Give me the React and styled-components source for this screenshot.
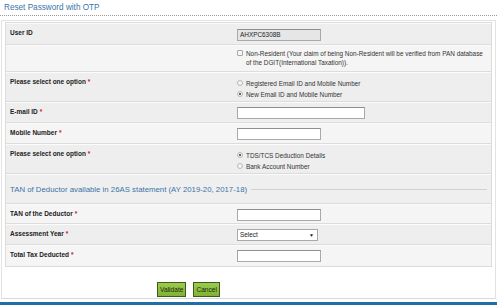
import React from "react";
import styled, { createGlobalStyle } from "styled-components";

const GlobalStyle = createGlobalStyle`
  html, body {
    margin: 0;
    padding: 0;
    background: #ffffff;
  }
  body {
    width: 497px;
    height: 305px;
    overflow: hidden;
    font-family: "Liberation Sans", Arial, sans-serif;
  }
`;

const Page = styled.div`
  width: 497px;
  height: 305px;
  display: flex;
  flex-direction: column;
`;

const Title = styled.div`
  height: 15px;
  padding-left: 4px;
  font-size: 8.2px;
  line-height: 15px;
  color: #3b74a8;
  border-bottom: 1px dotted #9a9a9a;
`;

const Panel = styled.div`
  margin: 4px 1px 0 1px;
  flex: 1;
  border: 1px solid #e2e2e2;
  border-bottom: 1px solid #d8d8d8;
  padding: 1px 3px 0 3px;
  display: flex;
  flex-direction: column;
`;

const Table = styled.div`
  border: 1px solid #dcdcdc;
  background: #efefef;
  display: flex;
  flex-direction: column;
`;

const Row = styled.div`
  display: grid;
  grid-template-columns: 231px 1fr;
  height: ${p => p.h}px;
  box-sizing: border-box;
  background: ${p => (p.light ? "#f5f5f5" : "#eeeeee")};
  border-bottom: 1px solid #dcdcdc;
  border-top: 1px solid #fbfbfb;
  &:last-child {
    border-bottom: none;
  }
`;

const Label = styled.div`
  padding: 5px 0 0 4px;
  font-size: 6.5px;
  font-weight: bold;
  color: #222;
`;

const Star = styled.span`
  color: #d0112b;
  margin-left: 2px;
`;

const Field = styled.div`
  padding-top: ${p => p.pt ?? 4}px;
  font-size: 6.4px;
  color: #333;
  display: flex;
  flex-direction: column;
  gap: ${p => p.gap ?? 0}px;
`;

const TextInput = styled.div`
  width: ${p => p.w}px;
  height: 12px;
  box-sizing: border-box;
  border: 1px solid #a9a9a9;
  border-top-color: #8f8f8f;
  background: ${p => (p.disabled ? "#e6e6e6" : "#ffffff")};
  font-size: 6.4px;
  line-height: 10px;
  padding-left: 2px;
  color: #222;
`;

const Select = styled.div`
  width: 81px;
  height: 12px;
  box-sizing: border-box;
  border: 1px solid #a9a9a9;
  background: #fff;
  font-size: 6.4px;
  line-height: 10px;
  padding: 0 3px 0 2px;
  display: flex;
  justify-content: space-between;
  align-items: center;
  color: #222;
`;

const Caret = styled.span`
  font-size: 5px;
`;

const Option = styled.div`
  display: flex;
  align-items: flex-start;
  gap: 3px;
  line-height: 9px;
`;

const Radio = styled.span`
  flex: none;
  width: 6px;
  height: 6px;
  margin-top: 1px;
  border-radius: 50%;
  border: 1px solid #b8b8b8;
  background: #f4f4f4;
  box-sizing: border-box;
  display: flex;
  align-items: center;
  justify-content: center;
  &::after {
    content: "";
    width: 2px;
    height: 2px;
    border-radius: 50%;
    background: ${p => (p.checked ? "#333" : "transparent")};
  }
`;

const Check = styled.span`
  flex: none;
  width: 6px;
  height: 6px;
  margin-top: 1px;
  border: 1px solid #a8a8a8;
  border-radius: 1px;
  background: #f6f6f6;
  box-sizing: border-box;
`;

const Section = styled.div`
  height: 30px;
  box-sizing: border-box;
  border-top: 1px solid #fbfbfb;
  border-bottom: 1px solid #dcdcdc;
  display: flex;
  align-items: center;
  gap: 4px;
  padding: 0 4px 0 4px;
  font-size: 7.8px;
  color: #3b74a8;
  &::after {
    content: "";
    flex: 1;
    height: 1px;
    background: #d0d0d0;
  }
`;

const Buttons = styled.div`
  display: flex;
  justify-content: center;
  gap: 7px;
  padding: 15px 0 0 0;
  margin-left: -120px;
`;

const Button = styled.div`
  height: 15px;
  box-sizing: border-box;
  padding: 0 2px;
  background: linear-gradient(#9ccb4f, #7fb234);
  border: 1px solid #3f5a1c;
  font-size: 6.6px;
  line-height: 13px;
  color: #1c2a08;
`;

const BlueBar = styled.div`
  height: 3px;
  margin-top: 3px;
  background: #1f6ea6;
`;

export default function App() {
  return (
    <Page>
      <GlobalStyle />
      <Title>Reset Password with OTP</Title>
      <Panel>
        <Table>
          <Row h={22}>
            <Label>User ID</Label>
            <Field pt={5}>
              <TextInput w={84} disabled>AHXPC6308B</TextInput>
            </Field>
          </Row>
          <Row h={27} light>
            <Label />
            <Field pt={3}>
              <Option>
                <Check />
                <span>
                  Non-Resident (Your claim of being Non-Resident will be verified from PAN database
                  <br />
                  of the DGIT(International Taxation)).
                </span>
              </Option>
            </Field>
          </Row>
          <Row h={30}>
            <Label>
              Please select one option<Star>*</Star>
            </Label>
            <Field pt={6} gap={2}>
              <Option>
                <Radio />
                Registered Email ID and Mobile Number
              </Option>
              <Option>
                <Radio checked />
                New Email ID and Mobile Number
              </Option>
            </Field>
          </Row>
          <Row h={21}>
            <Label>
              E-mail ID<Star>*</Star>
            </Label>
            <Field>
              <TextInput w={128} />
            </Field>
          </Row>
          <Row h={21} light>
            <Label>
              Mobile Number<Star>*</Star>
            </Label>
            <Field>
              <TextInput w={84} />
            </Field>
          </Row>
          <Row h={30}>
            <Label>
              Please select one option<Star>*</Star>
            </Label>
            <Field pt={6} gap={2}>
              <Option>
                <Radio checked />
                TDS/TCS Deduction Details
              </Option>
              <Option>
                <Radio />
                Bank Account Number
              </Option>
            </Field>
          </Row>
          <Section>TAN of Deductor available in 26AS statement (AY 2019-20, 2017-18)</Section>
          <Row h={20} light>
            <Label>
              TAN of the Deductor<Star>*</Star>
            </Label>
            <Field>
              <TextInput w={84} />
            </Field>
          </Row>
          <Row h={21}>
            <Label>
              Assessment Year<Star>*</Star>
            </Label>
            <Field>
              <Select>
                Select <Caret>▼</Caret>
              </Select>
            </Field>
          </Row>
          <Row h={21} light>
            <Label>
              Total Tax Deducted<Star>*</Star>
            </Label>
            <Field>
              <TextInput w={84} />
            </Field>
          </Row>
        </Table>
        <Buttons>
          <Button>Validate</Button>
          <Button>Cancel</Button>
        </Buttons>
      </Panel>
      <BlueBar />
    </Page>
  );
}
